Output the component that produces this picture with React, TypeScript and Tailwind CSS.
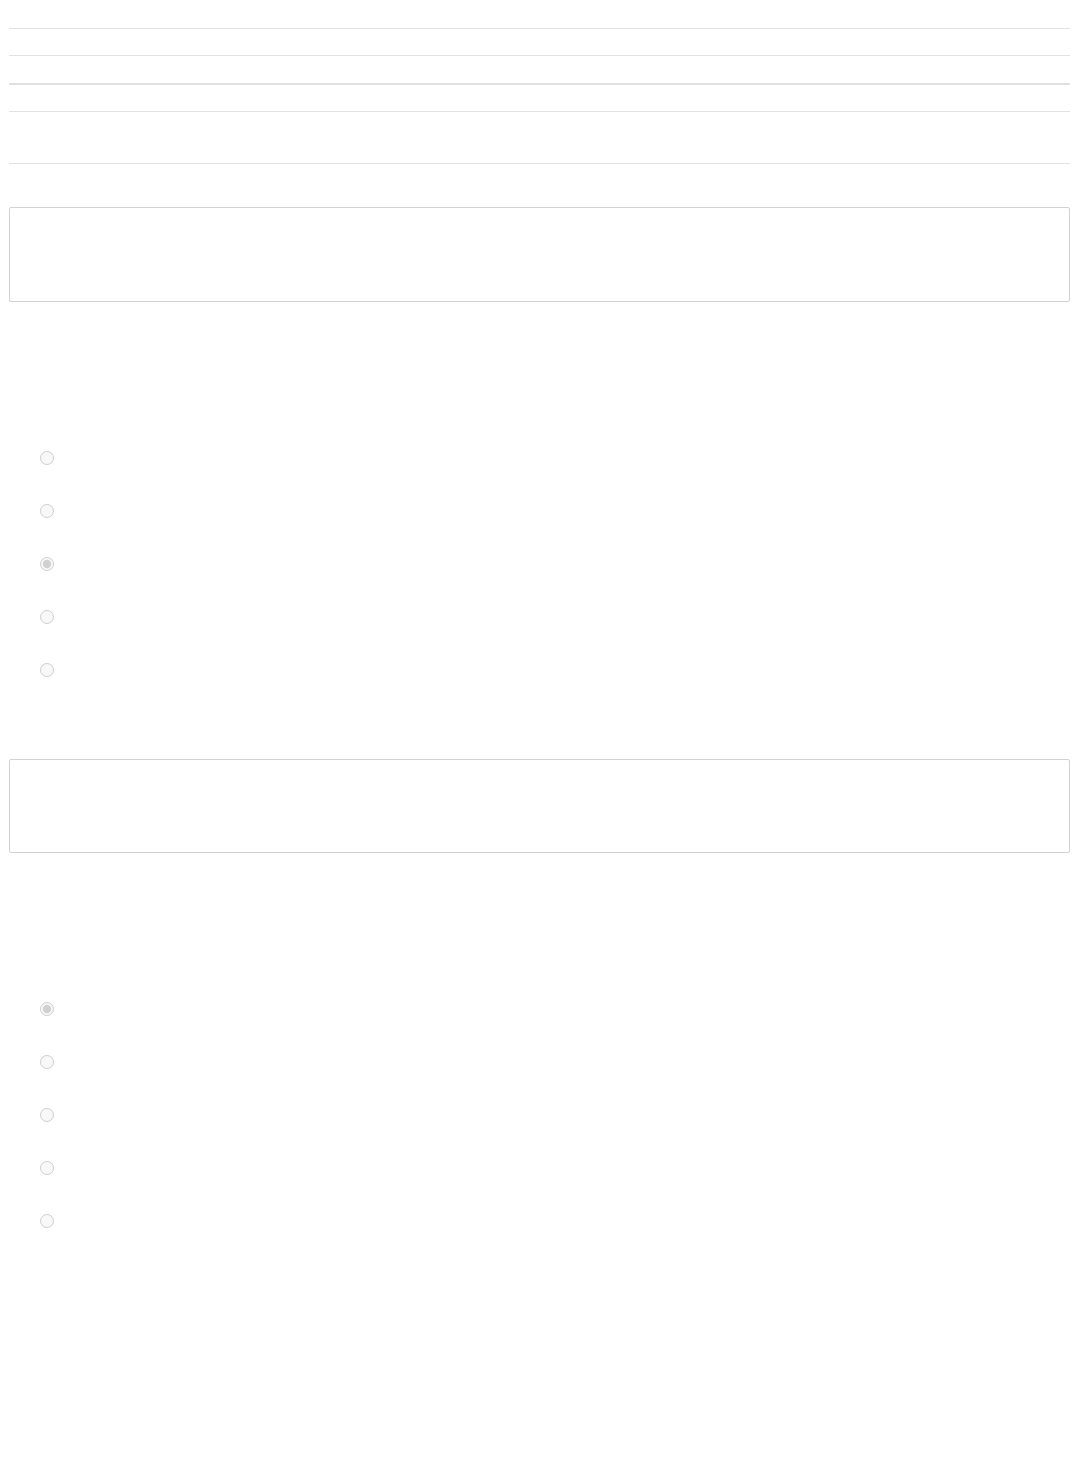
export default function App() {
  const first = [false, false, true, false, false];
  const second = [true, false, false, false, false];

  return (
    <div className="min-h-[1481px] bg-white pl-[9px] pr-[8px] pt-[28px] font-['Liberation_Sans',Arial,sans-serif]">
      {/* header rows */}
      <div className="h-[27px] border-t border-[#e2e2e2]" />
      <div className="h-[28px] border-t border-[#e2e2e2]" />
      <div className="h-[28px] border-t-2 border-[#dde0e4]" />
      <div className="h-[52px] border-t border-[#e2e2e2]" />
      <div className="h-[44px] border-t border-[#e2e2e2]" />

      <div className="h-[95px] rounded-[2px] border border-[#cfd2d6]" />

      <div className="mt-[129px] flex flex-col">
        {first.map((checked, i) => (
          <label key={i} className="flex h-[53px] items-center pl-[31px]">
            <input type="radio" name="a" disabled defaultChecked={checked} className="m-0 h-[14px] w-[14px]" />
          </label>
        ))}
      </div>

      <div className="mt-[63px] h-[94px] rounded-[2px] border border-[#cfd2d6]" />

      <div className="mt-[129px] flex flex-col">
        {second.map((checked, i) => (
          <label key={i} className="flex h-[53px] items-center pl-[31px]">
            <input type="radio" name="b" disabled defaultChecked={checked} className="m-0 h-[14px] w-[14px]" />
          </label>
        ))}
      </div>
    </div>
  );
}
